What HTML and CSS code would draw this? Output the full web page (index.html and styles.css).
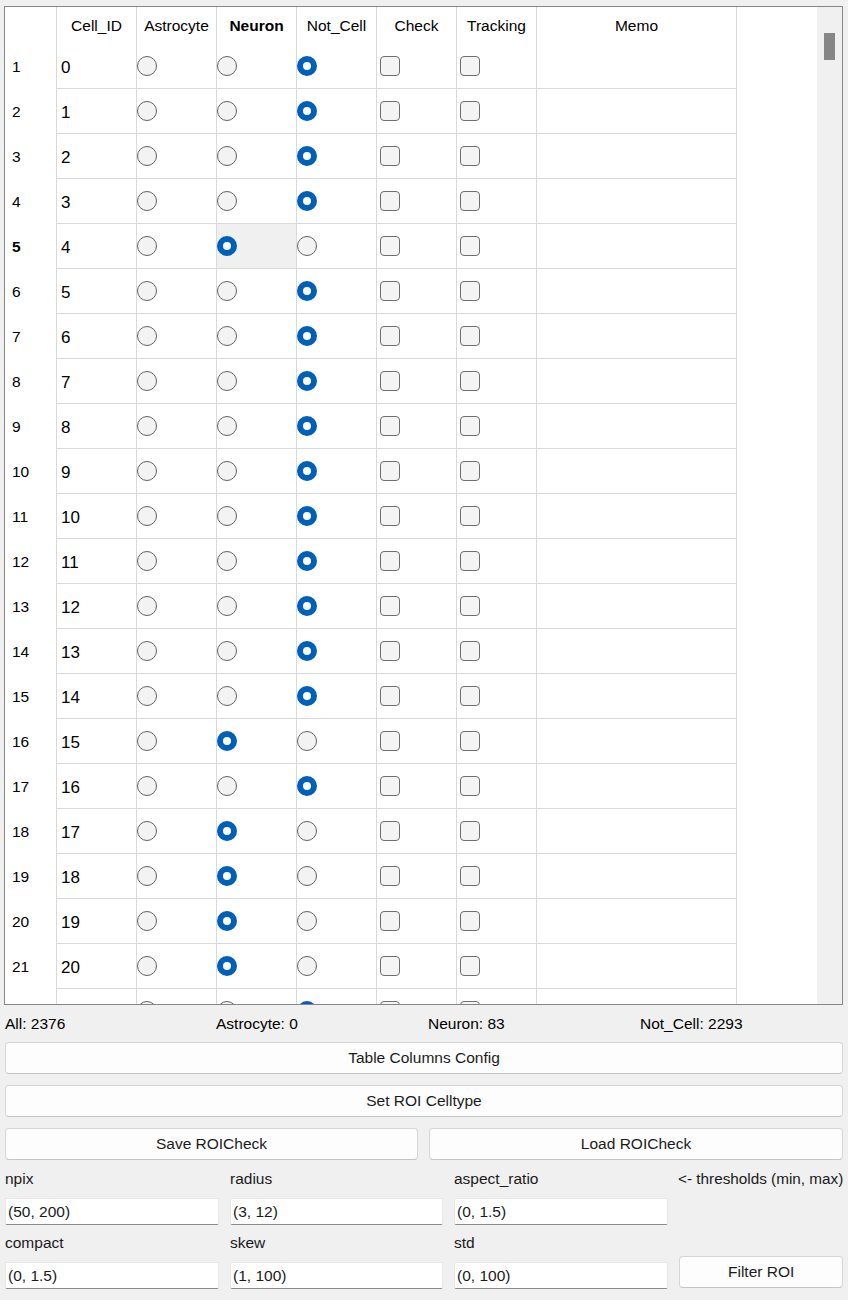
FILE: index.html
```html
<!DOCTYPE html>
<html>
<head>
<meta charset="utf-8">
<link rel="stylesheet" href="styles.css">
</head>
<body>
<div class="app">
  <div class="frame">
    <div class="viewport">
      <div class="hrow">
        <div class="rh"></div>
        <div class="hc">Cell_ID</div>
        <div class="hc">Astrocyte</div>
        <div class="hc bold">Neuron</div>
        <div class="hc">Not_Cell</div>
        <div class="hc">Check</div>
        <div class="hc">Tracking</div>
        <div class="hc memo">Memo</div>
      </div>
      <div class="row"><div class="rh">1</div><div class="c id">0</div><div class="c"><span class="radio"></span></div><div class="c"><span class="radio"></span></div><div class="c"><span class="radio on"></span></div><div class="c"><span class="chk"></span></div><div class="c"><span class="chk"></span></div><div class="c memo"></div></div>
      <div class="row"><div class="rh">2</div><div class="c id">1</div><div class="c"><span class="radio"></span></div><div class="c"><span class="radio"></span></div><div class="c"><span class="radio on"></span></div><div class="c"><span class="chk"></span></div><div class="c"><span class="chk"></span></div><div class="c memo"></div></div>
      <div class="row"><div class="rh">3</div><div class="c id">2</div><div class="c"><span class="radio"></span></div><div class="c"><span class="radio"></span></div><div class="c"><span class="radio on"></span></div><div class="c"><span class="chk"></span></div><div class="c"><span class="chk"></span></div><div class="c memo"></div></div>
      <div class="row"><div class="rh">4</div><div class="c id">3</div><div class="c"><span class="radio"></span></div><div class="c"><span class="radio"></span></div><div class="c"><span class="radio on"></span></div><div class="c"><span class="chk"></span></div><div class="c"><span class="chk"></span></div><div class="c memo"></div></div>
      <div class="row"><div class="rh bold">5</div><div class="c id">4</div><div class="c"><span class="radio"></span></div><div class="c focus"><span class="radio on"></span></div><div class="c"><span class="radio"></span></div><div class="c"><span class="chk"></span></div><div class="c"><span class="chk"></span></div><div class="c memo"></div></div>
      <div class="row"><div class="rh">6</div><div class="c id">5</div><div class="c"><span class="radio"></span></div><div class="c"><span class="radio"></span></div><div class="c"><span class="radio on"></span></div><div class="c"><span class="chk"></span></div><div class="c"><span class="chk"></span></div><div class="c memo"></div></div>
      <div class="row"><div class="rh">7</div><div class="c id">6</div><div class="c"><span class="radio"></span></div><div class="c"><span class="radio"></span></div><div class="c"><span class="radio on"></span></div><div class="c"><span class="chk"></span></div><div class="c"><span class="chk"></span></div><div class="c memo"></div></div>
      <div class="row"><div class="rh">8</div><div class="c id">7</div><div class="c"><span class="radio"></span></div><div class="c"><span class="radio"></span></div><div class="c"><span class="radio on"></span></div><div class="c"><span class="chk"></span></div><div class="c"><span class="chk"></span></div><div class="c memo"></div></div>
      <div class="row"><div class="rh">9</div><div class="c id">8</div><div class="c"><span class="radio"></span></div><div class="c"><span class="radio"></span></div><div class="c"><span class="radio on"></span></div><div class="c"><span class="chk"></span></div><div class="c"><span class="chk"></span></div><div class="c memo"></div></div>
      <div class="row"><div class="rh">10</div><div class="c id">9</div><div class="c"><span class="radio"></span></div><div class="c"><span class="radio"></span></div><div class="c"><span class="radio on"></span></div><div class="c"><span class="chk"></span></div><div class="c"><span class="chk"></span></div><div class="c memo"></div></div>
      <div class="row"><div class="rh">11</div><div class="c id">10</div><div class="c"><span class="radio"></span></div><div class="c"><span class="radio"></span></div><div class="c"><span class="radio on"></span></div><div class="c"><span class="chk"></span></div><div class="c"><span class="chk"></span></div><div class="c memo"></div></div>
      <div class="row"><div class="rh">12</div><div class="c id">11</div><div class="c"><span class="radio"></span></div><div class="c"><span class="radio"></span></div><div class="c"><span class="radio on"></span></div><div class="c"><span class="chk"></span></div><div class="c"><span class="chk"></span></div><div class="c memo"></div></div>
      <div class="row"><div class="rh">13</div><div class="c id">12</div><div class="c"><span class="radio"></span></div><div class="c"><span class="radio"></span></div><div class="c"><span class="radio on"></span></div><div class="c"><span class="chk"></span></div><div class="c"><span class="chk"></span></div><div class="c memo"></div></div>
      <div class="row"><div class="rh">14</div><div class="c id">13</div><div class="c"><span class="radio"></span></div><div class="c"><span class="radio"></span></div><div class="c"><span class="radio on"></span></div><div class="c"><span class="chk"></span></div><div class="c"><span class="chk"></span></div><div class="c memo"></div></div>
      <div class="row"><div class="rh">15</div><div class="c id">14</div><div class="c"><span class="radio"></span></div><div class="c"><span class="radio"></span></div><div class="c"><span class="radio on"></span></div><div class="c"><span class="chk"></span></div><div class="c"><span class="chk"></span></div><div class="c memo"></div></div>
      <div class="row"><div class="rh">16</div><div class="c id">15</div><div class="c"><span class="radio"></span></div><div class="c"><span class="radio on"></span></div><div class="c"><span class="radio"></span></div><div class="c"><span class="chk"></span></div><div class="c"><span class="chk"></span></div><div class="c memo"></div></div>
      <div class="row"><div class="rh">17</div><div class="c id">16</div><div class="c"><span class="radio"></span></div><div class="c"><span class="radio"></span></div><div class="c"><span class="radio on"></span></div><div class="c"><span class="chk"></span></div><div class="c"><span class="chk"></span></div><div class="c memo"></div></div>
      <div class="row"><div class="rh">18</div><div class="c id">17</div><div class="c"><span class="radio"></span></div><div class="c"><span class="radio on"></span></div><div class="c"><span class="radio"></span></div><div class="c"><span class="chk"></span></div><div class="c"><span class="chk"></span></div><div class="c memo"></div></div>
      <div class="row"><div class="rh">19</div><div class="c id">18</div><div class="c"><span class="radio"></span></div><div class="c"><span class="radio on"></span></div><div class="c"><span class="radio"></span></div><div class="c"><span class="chk"></span></div><div class="c"><span class="chk"></span></div><div class="c memo"></div></div>
      <div class="row"><div class="rh">20</div><div class="c id">19</div><div class="c"><span class="radio"></span></div><div class="c"><span class="radio on"></span></div><div class="c"><span class="radio"></span></div><div class="c"><span class="chk"></span></div><div class="c"><span class="chk"></span></div><div class="c memo"></div></div>
      <div class="row"><div class="rh">21</div><div class="c id">20</div><div class="c"><span class="radio"></span></div><div class="c"><span class="radio on"></span></div><div class="c"><span class="radio"></span></div><div class="c"><span class="chk"></span></div><div class="c"><span class="chk"></span></div><div class="c memo"></div></div>
      <div class="row"><div class="rh"></div><div class="c id"></div><div class="c"><span class="radio"></span></div><div class="c"><span class="radio"></span></div><div class="c"><span class="radio on"></span></div><div class="c"><span class="chk"></span></div><div class="c"><span class="chk"></span></div><div class="c memo"></div></div>
    </div>
    <div class="vscroll"><div class="thumb"></div></div>
  </div>
  <div class="status">
    <div>All: 2376</div>
    <div>Astrocyte: 0</div>
    <div>Neuron: 83</div>
    <div>Not_Cell: 2293</div>
  </div>
  <div class="btn">Table Columns Config</div>
  <div class="btn">Set ROI Celltype</div>
  <div class="btnrow">
    <div class="btn">Save ROICheck</div>
    <div class="btn">Load ROICheck</div>
  </div>
  <div class="filters">
    <div class="lbl">npix</div>
    <div class="lbl">radius</div>
    <div class="lbl">aspect_ratio</div>
    <div class="lbl note">&lt;- thresholds (min, max)</div>
    <div class="inp">(50, 200)</div>
    <div class="inp">(3, 12)</div>
    <div class="inp">(0, 1.5)</div>
    <div class="empty"></div>
    <div class="lbl">compact</div>
    <div class="lbl">skew</div>
    <div class="lbl">std</div>
    <div class="btn filter">Filter ROI</div>
    <div class="inp">(0, 1.5)</div>
    <div class="inp">(1, 100)</div>
    <div class="inp">(0, 100)</div>
  </div>
</div>
</body>
</html>
```

FILE: styles.css
```css
* { box-sizing: border-box; }
html, body {
  margin: 0;
  padding: 0;
  background: #f0f0f0;
}
body {
  font-family: "Liberation Sans", Arial, sans-serif;
  font-size: 15.5px;
  color: #000;
  width: 848px;
  height: 1300px;
  overflow: hidden;
}
.app {
  padding: 6px 0 0 5px;
  width: 843px;
}
.frame {
  margin-left: -1px;
  width: 839px;
  height: 999px;
  border: 1px solid #868686;
  background: #fff;
  display: flex;
}
.viewport {
  width: 812px;
  height: 997px;
  overflow: hidden;
  background: #fff;
}
.vscroll {
  width: 25px;
  height: 997px;
  background: #f0f0f0;
  padding-top: 26px;
}
.thumb {
  width: 11px;
  height: 27px;
  margin-left: 7px;
  background: #868686;
}
.hrow {
  display: flex;
  height: 37px;
}
.row {
  display: flex;
  height: 45px;
}
.rh {
  width: 52px;
  flex: none;
  border-right: 1px solid #d9d9d9;
  display: flex;
  align-items: center;
  padding-left: 7px;
  padding-top: 1px;
  font-size: 15.5px;
}
.hc {
  width: 80px;
  flex: none;
  border-right: 1px solid #d9d9d9;
  display: flex;
  align-items: center;
  justify-content: center;
  font-size: 15.5px;
  padding-top: 1px;
}
.hc.memo, .c.memo { width: 200px; }
.bold { font-weight: bold; }
.c {
  width: 80px;
  flex: none;
  border-right: 1px solid #d9d9d9;
  border-bottom: 1px solid #d9d9d9;
  display: flex;
  align-items: center;
}
.c.id {
  padding-left: 4px;
  padding-top: 3px;
  font-size: 17px;
}
.c.focus { background: #f0f0f0; }
.radio {
  width: 20px;
  height: 20px;
  border-radius: 50%;
  border: 1px solid #626262;
  background: #f3f3f3;
}
.radio.on {
  border: 6px solid #005fb8;
  background: #fff;
}
.chk {
  width: 20px;
  height: 20px;
  margin-left: 3px;
  border-radius: 4px;
  border: 1px solid #6e6e6e;
  background: #f4f4f4;
}
.status {
  display: grid;
  grid-template-columns: 211px 212px 212px 1fr;
  height: 37px;
  align-items: center;
  width: 838px;
}
.btn {
  width: 838px;
  height: 32px;
  background: #fdfdfd;
  border: 1px solid #d5d5d5;
  border-bottom-color: #c4c4c4;
  border-radius: 4px;
  display: flex;
  align-items: center;
  justify-content: center;
  color: #1b1b1b;
  margin-bottom: 11px;
}
.btnrow {
  display: grid;
  grid-template-columns: 413px 1fr;
  gap: 11px;
  width: 838px;
}
.btnrow .btn {
  width: auto;
  margin-bottom: 0;
}
.filters {
  display: grid;
  grid-template-columns: 214px 213px 214px 1fr;
  grid-template-rows: 38px 27px 37px 27px;
  column-gap: 11px;
  width: 838px;
}
.lbl {
  display: flex;
  align-items: center;
  padding-bottom: 1px;
  color: #1a1a1a;
  white-space: nowrap;
}
.lbl.note {
  font-size: 15.3px;
  margin-left: -1px;
}
.inp {
  background: #fff;
  border: 1px solid #e6e6e6;
  border-bottom: 1px solid #8a8a8a;
  border-radius: 2px;
  display: flex;
  align-items: center;
  padding-left: 2px;
  color: #1a1a1a;
}
.btn.filter {
  width: auto;
  grid-column: 4;
  grid-row: 3 / 5;
  align-self: end;
  margin-bottom: 1px;
}
```
